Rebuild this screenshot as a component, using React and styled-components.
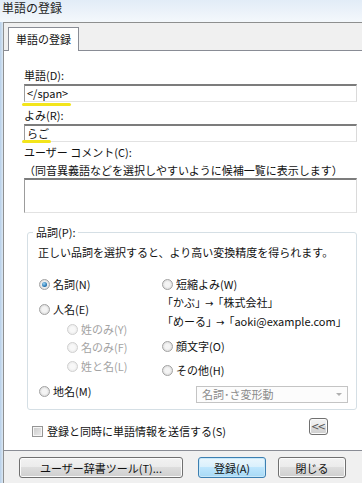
import React from "react";
import styled, { createGlobalStyle, css } from "styled-components";

const GlobalStyle = createGlobalStyle`
  html, body {
    margin: 0;
    padding: 0;
    background: #f0f0f0;
  }
  body {
    font-family: "Noto Sans CJK JP", "Noto Sans", sans-serif;
    font-size: 11px;
    color: #111;
  }
`;

const App = () => {
  return (
    <Window>
      <GlobalStyle />
      <TitleBar>単語の登録</TitleBar>
      <Frame>
        <FrameEdge />
        <Client>
          <TabStrip>
            <Tab>単語の登録</Tab>
          </TabStrip>
          <TabPage>
            <Label>単語(D):</Label>
            <Field>
              <TextBox>&lt;/span&gt;</TextBox>
              <Highlight $width={49} $bottom={-4} />
            </Field>
            <Label $top={5}>よみ(R):</Label>
            <Field>
              <TextBox>らご</TextBox>
              <Highlight $width={29} $bottom={-1} />
            </Field>
            <Label $top={2}>ユーザー コメント(C):</Label>
            <Label $top={2}>（同音異義語などを選択しやすいように候補一覧に表示します）</Label>
            <TextArea />

            <Group>
              <Legend>品詞(P):</Legend>
              <Description>正しい品詞を選択すると、より高い変換精度を得られます。</Description>
              <Columns>
                <Column>
                  <RadioRow>
                    <Radio $checked />
                    名詞(N)
                  </RadioRow>
                  <RadioRow $top={9}>
                    <Radio />
                    人名(E)
                  </RadioRow>
                  <RadioRow $top={4} $indent={28} $disabled>
                    <Radio $disabled />
                    姓のみ(Y)
                  </RadioRow>
                  <RadioRow $top={2} $indent={28} $disabled>
                    <Radio $disabled />
                    名のみ(F)
                  </RadioRow>
                  <RadioRow $top={3} $indent={28} $disabled>
                    <Radio $disabled />
                    姓と名(L)
                  </RadioRow>
                  <RadioRow $top={9}>
                    <Radio />
                    地名(M)
                  </RadioRow>
                </Column>
                <Column $right>
                  <RadioRow>
                    <Radio />
                    短縮よみ(W)
                  </RadioRow>
                  <Example $top={2}>
                    「かぶ」<ArrowGlyph>→</ArrowGlyph>「株式会社」
                  </Example>
                  <Example $top={1}>
                    「めーる」<ArrowGlyph>→</ArrowGlyph>「aoki@example.com」
                  </Example>
                  <RadioRow $top={7}>
                    <Radio />
                    顔文字(O)
                  </RadioRow>
                  <RadioRow $top={8}>
                    <Radio />
                    その他(H)
                  </RadioRow>
                  <Select>
                    名詞･さ変形動
                    <Arrow />
                  </Select>
                </Column>
              </Columns>
            </Group>

            <CheckRow>
              <CheckLabel>
                <CheckBox />
                登録と同時に単語情報を送信する(S)
              </CheckLabel>
              <SmallButton>&lt;&lt;</SmallButton>
            </CheckRow>
          </TabPage>
          <Footer>
            <Button $width={164}>ユーザー辞書ツール(T)...</Button>
            <Button $width={68} $primary>登録(A)</Button>
            <Button $width={68}>閉じる</Button>
          </Footer>
        </Client>
      </Frame>
    </Window>
  );
};

export default App;

const Window = styled.div`
  width: 362px;
  height: 483px;
  overflow: hidden;
  display: flex;
  flex-direction: column;
  background: #f0f0f0;
`;

const TitleBar = styled.div`
  height: 22px;
  flex: none;
  padding-left: 2px;
  font-size: 12px;
  line-height: 15px;
  color: #1e1e1e;
  background: linear-gradient(#e2ecf7, #f4f8fc);
`;

const Frame = styled.div`
  flex: 1;
  display: flex;
  min-height: 0;
`;

const FrameEdge = styled.div`
  width: 3px;
  flex: none;
  background: linear-gradient(to right, #b7cfe8, #dbe8f4);
`;

const Client = styled.div`
  flex: 1;
  min-width: 0;
  display: flex;
  flex-direction: column;
  border-top: 1px solid #8e8f8f;
  border-left: 1px solid #8e8f8f;
`;

const TabStrip = styled.div`
  height: 27px;
  flex: none;
  display: flex;
  align-items: flex-end;
  padding-left: 4px;
`;

const Tab = styled.div`
  position: relative;
  z-index: 1;
  height: 24px;
  margin-bottom: -1px;
  box-sizing: border-box;
  padding: 0 7px;
  line-height: 22px;
  background: #fff;
  border: 1px solid #898c95;
  border-bottom: none;
`;

const TabPage = styled.div`
  height: 401px;
  flex: none;
  box-sizing: border-box;
  display: flex;
  flex-direction: column;
  padding: 16px 5px 0 20px;
  background: #fff;
  border-top: 1px solid #898c95;
  border-bottom: 1px solid #898c95;
`;

const Label = styled.div`
  line-height: 16px;
  margin-top: ${(p) => p.$top || 0}px;
  white-space: nowrap;
`;

const Field = styled.div`
  position: relative;
  margin-top: 1px;
`;

const boxBorders = css`
  box-sizing: border-box;
  border-top: 2px solid #7c7c7c;
  border-left: 1px solid #9c9c9c;
  border-right: 1px solid #dadada;
  border-bottom: 1px solid #e2e2e2;
  background: #fff;
`;

const TextBox = styled.div`
  ${boxBorders};
  height: 18px;
  padding: 0 2px;
  line-height: 14px;
`;

const Highlight = styled.span`
  position: absolute;
  left: -2px;
  bottom: ${(p) => p.$bottom}px;
  width: ${(p) => p.$width}px;
  height: 3px;
  border-radius: 2px;
  background: #f3e51b;
`;

const TextArea = styled.div`
  ${boxBorders};
  height: 35px;
`;

const Group = styled.div`
  position: relative;
  margin: 19px 0 0 3px;
  padding: 11px 8px 6px 10px;
  border: 1px solid #d5dfe5;
  border-radius: 3px;
`;

const Legend = styled.span`
  position: absolute;
  top: -9px;
  left: 5px;
  padding: 0 3px;
  line-height: 16px;
  background: #fff;
`;

const Description = styled.div`
  line-height: 16px;
  white-space: nowrap;
`;

const Columns = styled.div`
  display: grid;
  grid-template-columns: 122px 1fr;
  margin-top: 16px;
`;

const Column = styled.div`
  display: flex;
  flex-direction: column;
  padding-left: ${(p) => (p.$right ? 2 : 1)}px;
`;

const RadioRow = styled.div`
  display: flex;
  align-items: center;
  gap: 3px;
  height: 16px;
  margin-top: ${(p) => p.$top || 0}px;
  padding-left: ${(p) => p.$indent || 0}px;
  color: ${(p) => (p.$disabled ? "#a3a3a3" : "#111")};
  white-space: nowrap;
`;

const Radio = styled.span`
  position: relative;
  width: 11px;
  height: 11px;
  flex: none;
  box-sizing: border-box;
  border-radius: 50%;
  border: 1px solid ${(p) => (p.$disabled ? "#d0d0d0" : "#a2a2a2")};
  background: ${(p) =>
    p.$disabled
      ? "radial-gradient(circle, #f8f8f8 0 35%, #e4e4e4 100%)"
      : "radial-gradient(circle, #f4f4f4 0 35%, #cfcfcf 100%)"};

  ${(p) =>
    p.$checked &&
    css`
      &::after {
        content: "";
        position: absolute;
        left: 2px;
        top: 2px;
        width: 5px;
        height: 5px;
        border-radius: 50%;
        background: radial-gradient(circle at 40% 35%, #9ed8f7, #1a6aa8 70%, #0c4b80);
      }
    `}
`;

const Example = styled.div`
  line-height: 16px;
  margin-top: ${(p) => p.$top || 0}px;
  white-space: nowrap;
`;

const ArrowGlyph = styled.span`
  font-family: "DejaVu Sans", sans-serif;
  font-size: 10px;
  margin: 0 -1px;
`;

const Select = styled.div`
  position: relative;
  margin: 8px 0 0 34px;
  width: 152px;
  height: 17px;
  box-sizing: border-box;
  padding-left: 5px;
  line-height: 15px;
  color: #8a8a8a;
  border: 1px solid #c4c4c4;
  background: #fcfcfc;
`;

const Arrow = styled.span`
  position: absolute;
  right: 5px;
  top: 6px;
  width: 0;
  height: 0;
  border-left: 3px solid transparent;
  border-right: 3px solid transparent;
  border-top: 3px solid #b0b0b0;
`;

const CheckRow = styled.div`
  flex: 1;
  display: flex;
  align-items: flex-start;
  padding: 0 29px 0 8px;
`;

const CheckLabel = styled.div`
  display: flex;
  align-items: center;
  gap: 4px;
  height: 16px;
  margin-top: 13px;
  white-space: nowrap;
`;

const CheckBox = styled.span`
  width: 11px;
  height: 11px;
  flex: none;
  box-sizing: border-box;
  border: 1px solid #959595;
  box-shadow: inset 0 0 0 1px #f6f6f6;
  background: linear-gradient(135deg, #c9c9c9, #ededed);
`;

const buttonFace = css`
  box-sizing: border-box;
  border: 1px solid #707070;
  border-radius: 3px;
  box-shadow: inset 0 0 0 1px #fbfbfb;
  background: linear-gradient(#f2f2f2 0%, #ebebeb 50%, #dddddd 50%, #cfcfcf 100%);
  font-family: inherit;
  font-size: 11px;
  color: #111;
  padding: 0;
  display: flex;
  align-items: center;
  justify-content: center;
`;

const SmallButton = styled.div`
  ${buttonFace};
  margin: 8px 0 0 auto;
  width: 19px;
  height: 17px;
  font-family: "DejaVu Sans", sans-serif;
  font-size: 10px;
  color: #555;
  letter-spacing: -2px;
  padding-right: 2px;
`;

const Footer = styled.div`
  display: flex;
  padding: 6px 0 0 15px;
  & > *:nth-child(2) {
    margin-left: 15px;
  }
  & > *:nth-child(3) {
    margin-left: 12px;
  }
`;

const Button = styled.div`
  ${buttonFace};
  width: ${(p) => p.$width}px;
  height: 21px;
  white-space: nowrap;

  ${(p) =>
    p.$primary &&
    css`
      border-color: #3c7fb1;
      box-shadow: inset 0 0 0 1px #c8e8f9;
      background: linear-gradient(#eaf6fd 0%, #d9f0fc 50%, #bee6fd 50%, #a7d9f5 100%);
    `}
`;
